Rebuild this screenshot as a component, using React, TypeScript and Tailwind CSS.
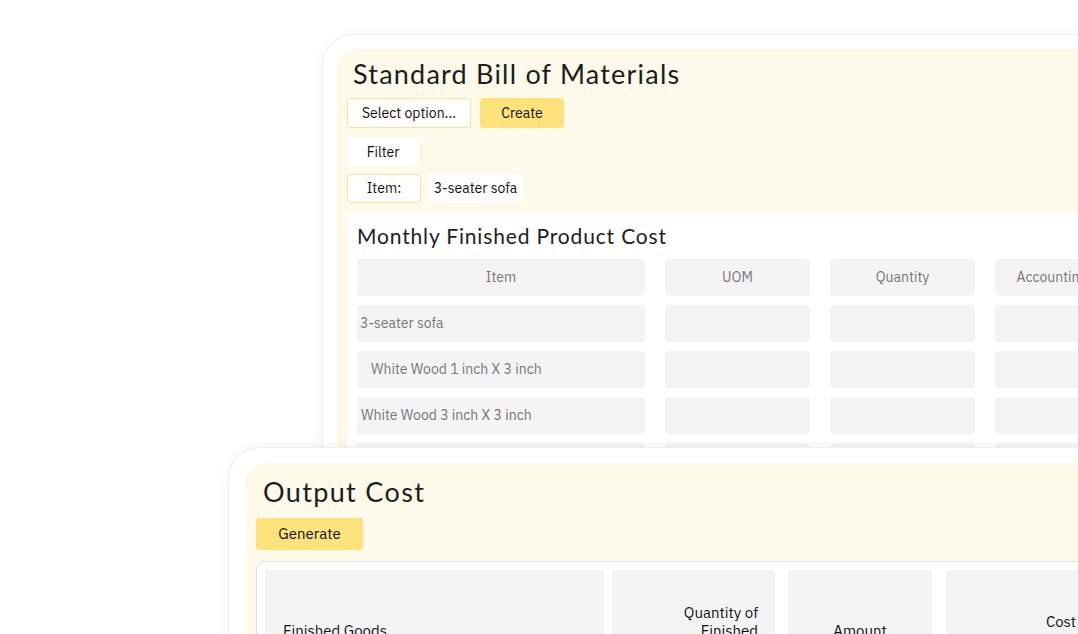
import React from "react";

const titleFont = { fontFamily: "Lato, 'Open Sans', sans-serif" };

const columns = ["Item", "UOM", "Quantity", "Accounting Cost"];
const rows = [
  { label: "3-seater sofa", pad: "pl-[3px]" },
  { label: "White Wood 1 inch X 3 inch", pad: "pl-[14px]" },
  { label: "White Wood 3 inch X 3 inch", pad: "pl-[4px]" },
  { label: "", pad: "" },
];

function Cell({ wide, children, className = "" }: { wide?: boolean; children?: React.ReactNode; className?: string }) {
  return (
    <div
      className={`flex h-[37px] shrink-0 items-center whitespace-nowrap rounded-[4px] bg-[#f4f4f4] text-[14px] text-[#777] ${
        wide ? "w-[288px]" : "w-[145px]"
      } ${className}`}
    >
      {children}
    </div>
  );
}

function BillOfMaterials() {
  return (
    <div className="absolute left-[322px] top-[34px] w-[820px] rounded-[32px] border border-[#f0f0f0] bg-white p-[14px] shadow-[0_0_14px_rgba(0,0,0,0.05)]">
      <div className="h-[420px] overflow-hidden rounded-[22px] bg-[#fefae9] px-[10px] pt-[8px]">
        <h1 className="pl-[6px] text-[27px] font-normal leading-[34px] tracking-[0.045em] text-[#1d1d1d]" style={titleFont}>
          Standard Bill of Materials
        </h1>
        <div className="mt-[7px] flex gap-[9px]">
          <button className="h-[30px] w-[124px] rounded-[3px] border border-[#f6e3a2] bg-white text-[14px] text-[#111]">
            Select option...
          </button>
          <button className="h-[30px] w-[84px] rounded-[3px] bg-[#fee27c] text-[14px] text-[#111]">Create</button>
        </div>
        <div className="mt-[10px] flex h-[28px] w-[72px] items-center justify-center rounded-[3px] bg-white text-[14px] text-[#111]">
          Filter
        </div>
        <div className="mt-[8px] flex gap-[7px]">
          <div className="flex h-[29px] w-[74px] items-center justify-center rounded-[3px] border border-[#f6e3a2] bg-white text-[14px] text-[#111]">
            Item:
          </div>
          <div className="flex h-[29px] w-[95px] items-center justify-center rounded-[3px] bg-white text-[14px] text-[#111]">
            3-seater sofa
          </div>
        </div>
        <div className="mt-[9px] h-[300px] rounded-tl-[6px] bg-white px-[10px] pt-[10px]">
          <h2 className="text-[21px] font-normal leading-[28px] tracking-[0.04em] text-[#1d1d1d]" style={titleFont}>
            Monthly Finished Product Cost
          </h2>
          <div className="mt-[9px] flex gap-[20px]">
            {columns.map((c, i) => (
              <Cell key={c} wide={i === 0} className="justify-center">
                {c}
              </Cell>
            ))}
          </div>
          {rows.map((r, ri) => (
            <div key={ri} className="mt-[9px] flex gap-[20px]">
              {columns.map((c, i) => (
                <Cell key={c} wide={i === 0} className={i === 0 ? r.pad : ""}>
                  {i === 0 ? r.label : null}
                </Cell>
              ))}
            </div>
          ))}
        </div>
      </div>
    </div>
  );
}

function OutputCost() {
  return (
    <div className="absolute left-[228px] top-[447px] w-[900px] rounded-[32px] border border-[#f0f0f0] bg-white px-[16px] pt-[15px] shadow-[0_0_14px_rgba(0,0,0,0.05)]">
      <div className="h-[240px] rounded-[22px] bg-[#fefae9] px-[11px] pt-[12px]">
        <h1 className="pl-[7px] text-[27px] font-normal leading-[34px] tracking-[0.05em] text-[#1d1d1d]" style={titleFont}>
          Output Cost
        </h1>
        <button className="mt-[9px] h-[32px] w-[107px] rounded-[3px] bg-[#fee27c] text-[15px] text-[#111]">Generate</button>
        <div className="mt-[11px] flex gap-[8px] rounded-[8px] border border-[#e2e2e2] bg-white p-[8px] text-[15px] text-[#111]">
          <div className="flex h-[122px] w-[339px] shrink-0 items-center rounded-[3px] bg-[#f4f4f4] pl-[18px]">Finished Goods</div>
          <div className="flex h-[122px] w-[163px] shrink-0 items-center justify-end rounded-[3px] bg-[#f4f4f4] pr-[17px]">
            <span className="w-[84px] text-right leading-[18px]">Quantity of Finished Goods</span>
          </div>
          <div className="ml-[5px] flex h-[122px] w-[144px] shrink-0 items-center justify-center rounded-[3px] bg-[#f4f4f4]">Amount</div>
          <div className="ml-[6px] flex h-[122px] w-[230px] shrink-0 items-center justify-center rounded-[3px] bg-[#f4f4f4]">
            <span className="text-center leading-[18px]">
              Cost
              <br />
              per Unit
            </span>
          </div>
        </div>
      </div>
    </div>
  );
}

export default function App() {
  return (
    <div
      className="relative h-[634px] w-[1078px] overflow-hidden bg-white"
      style={{ fontFamily: "'IBM Plex Sans', 'Noto Sans', Roboto, sans-serif" }}
    >
      <BillOfMaterials />
      <OutputCost />
    </div>
  );
}
